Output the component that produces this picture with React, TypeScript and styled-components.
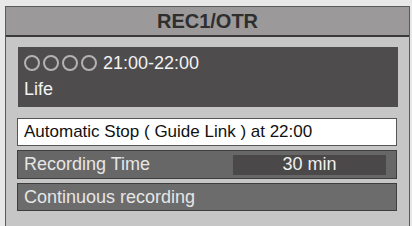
import React from "react";
import styled, { createGlobalStyle } from "styled-components";

const Global = createGlobalStyle`
  html, body { margin: 0; padding: 0; background: #e8e8e8; }
  body { font-family: "Liberation Sans", Arial, sans-serif; }
`;

const Page = styled.div`
  width: 412px;
  height: 226px;
  overflow: hidden;
  padding: 6px 2px 0 5px;
  box-sizing: border-box;
`;

const Panel = styled.div`
  border: 1px solid #5a5a5a;
  border-bottom: none;
  background: #c6c6c6;
  height: 230px;
  box-sizing: border-box;
`;

const Header = styled.div`
  height: 28px;
  background: #9b9999;
  border-bottom: 2px solid #3a3a3a;
  display: flex;
  align-items: center;
  justify-content: center;
  font-weight: bold;
  font-size: 20px;
  color: #2e2e2e;
`;

const Body = styled.div`
  padding: 10px 11px 0 11px;
  display: flex;
  flex-direction: column;
`;

const InfoBox = styled.div`
  height: 60px;
  width: 380px;
  margin-left: 1px;
  background: #4f4c4d;
  box-sizing: border-box;
  padding: 4px 6px 0 6px;
  color: #f2f2f2;
  font-size: 18px;
  display: flex;
  flex-direction: column;
  gap: 4px;
`;

const TimeLine = styled.div`
  display: flex;
  align-items: center;
  gap: 6px;
  height: 24px;
`;

const Circles = styled.div`
  display: flex;
  gap: 3px;
`;

const Circle = styled.span`
  width: 12px;
  height: 12px;
  border: 2px solid #b3b3b3;
  border-radius: 50%;
`;

const Row = styled.div<{ $variant: "white" | "dark" | "mid" }>`
  margin-top: ${(p) => (p.$variant === "white" ? "11px" : "4px")};
  width: 380px;
  height: ${(p) => (p.$variant === "dark" ? "29px" : "28px")};
  box-sizing: border-box;
  border: 1px solid ${(p) => (p.$variant === "white" ? "#555" : "#3e3e3e")};
  background: ${(p) =>
    p.$variant === "white" ? "#ffffff" : p.$variant === "dark" ? "#676767" : "#6c6c6c"};
  color: ${(p) => (p.$variant === "white" ? "#111" : "#e6e6e6")};
  font-size: ${(p) => (p.$variant === "white" ? "17px" : "18px")};
  display: flex;
  align-items: center;
  padding-left: 6px;
  padding-right: 10px;
  justify-content: space-between;
`;

const ValueBox = styled.div`
  width: 153px;
  height: 20px;
  background: #4a4848;
  color: #f0f0f0;
  display: flex;
  align-items: center;
  justify-content: center;
  font-size: 18px;
`;

export default function App() {
  return (
    <>
      <Global />
      <Page>
        <Panel>
          <Header>REC1/OTR</Header>
          <Body>
            <InfoBox>
              <TimeLine>
                <Circles>
                  <Circle />
                  <Circle />
                  <Circle />
                  <Circle />
                </Circles>
                <span>21:00-22:00</span>
              </TimeLine>
              <div>Life</div>
            </InfoBox>
            <Row $variant="white">Automatic Stop ( Guide Link ) at 22:00</Row>
            <Row $variant="dark">
              <span>Recording Time</span>
              <ValueBox>30 min</ValueBox>
            </Row>
            <Row $variant="mid">Continuous recording</Row>
          </Body>
        </Panel>
      </Page>
    </>
  );
}
